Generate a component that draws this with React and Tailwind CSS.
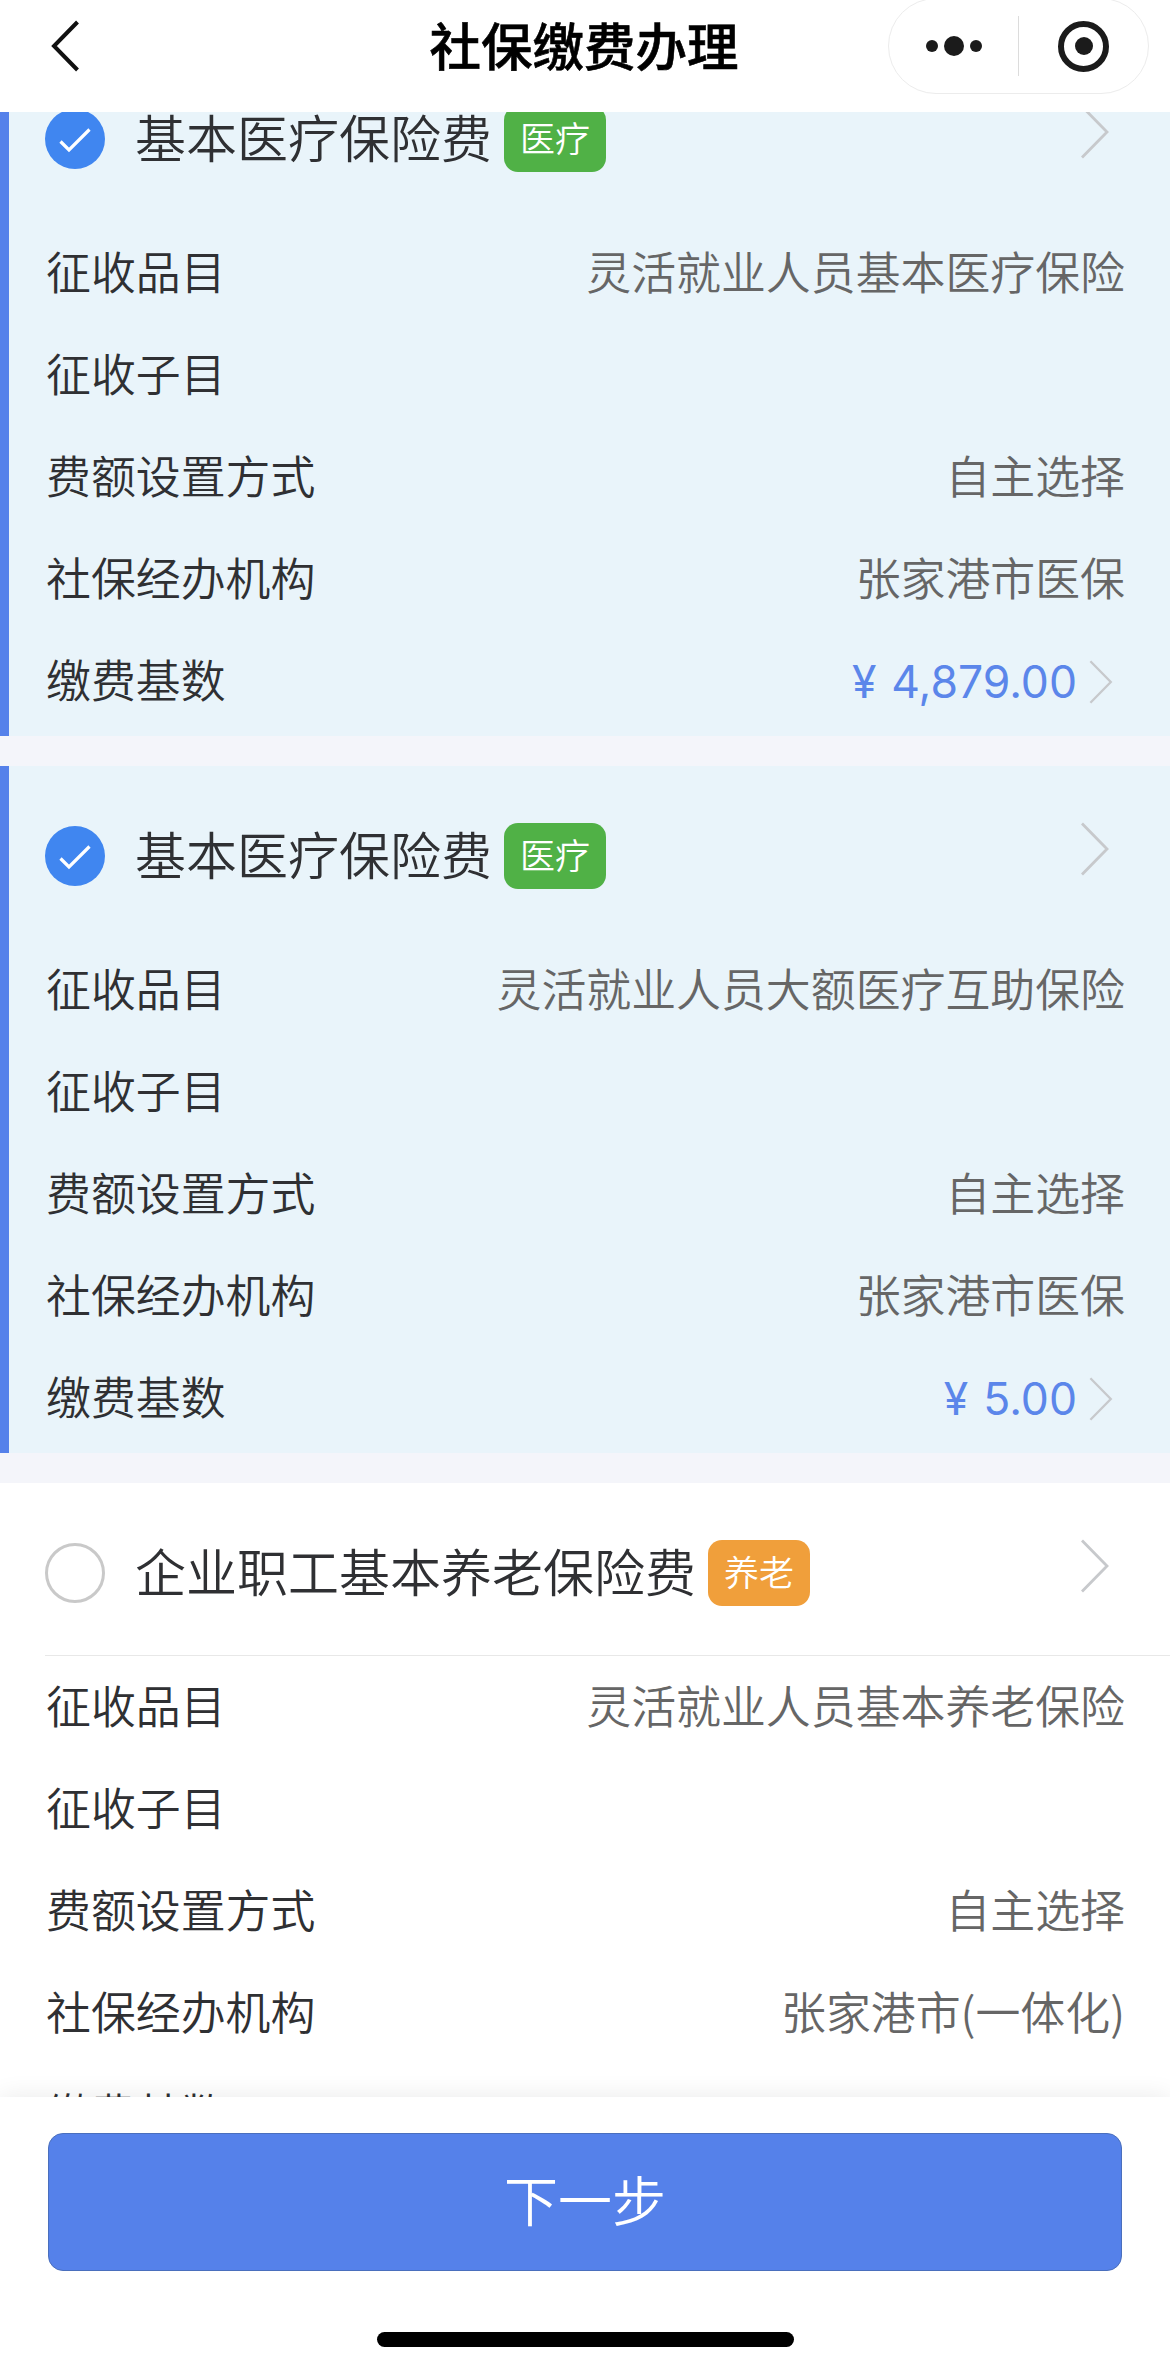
const plans = [
  {
    id: "medical-basic",
    name: "基本医疗保险费",
    tag: "医疗",
    checked: true,
    item: "灵活就业人员基本医疗保险",
    agency: "张家港市医保",
    base: "4,879.00",
  },
  {
    id: "medical-large",
    name: "基本医疗保险费",
    tag: "医疗",
    checked: true,
    item: "灵活就业人员大额医疗互助保险",
    agency: "张家港市医保",
    base: "5.00",
  },
  {
    id: "pension",
    name: "企业职工基本养老保险费",
    tag: "养老",
    checked: false,
    item: "灵活就业人员基本养老保险",
    agency: "张家港市(一体化)",
    base: "",
  },
];

const tagTone = {
  医疗: "bg-[#50b146]",
  养老: "bg-[#f09f3b]",
};

export default function App() {
  return (
    <div className="flex h-[2363px] w-[1170px] flex-col overflow-hidden bg-white font-['Noto_Sans_CJK_SC',sans-serif]">
      <NavBar />
      <main className="min-h-0 flex-1 overflow-hidden bg-[#f4f5fa]">
        {/* the list is scrolled a little under the nav bar */}
        <div className="-mt-[63px] flex flex-col gap-[30px]">
          {plans.map((plan) => (
            <PlanCard key={plan.id} plan={plan} />
          ))}
        </div>
      </main>
      <Footer />
    </div>
  );
}

function NavBar() {
  return (
    <header className="grid h-28 shrink-0 grid-cols-[1fr_auto_1fr] items-start bg-white">
      <svg
        className="mt-[18px] ml-[49px] h-14 w-8"
        viewBox="0 0 32 56"
        fill="none"
        stroke="#111"
        strokeWidth="4"
      >
        <path d="M28.500 4 5 28l23.500 24" />
      </svg>
      <h1 className="mt-1.5 mr-0.5 text-[51.5px] leading-[76px] font-medium text-black [-webkit-text-stroke:0.6px_#000]">
        社保缴费办理
      </h1>
      <div className="mr-[21px] -mt-0.5 flex h-24 w-[261px] items-center justify-self-end rounded-full border border-[#ececec]">
        <div className="flex flex-1 items-center justify-center gap-1.5">
          <i className="size-3 rounded-full bg-[#1b1b1b]" />
          <i className="size-5 rounded-full bg-[#1b1b1b]" />
          <i className="size-3 rounded-full bg-[#1b1b1b]" />
        </div>
        <div className="h-[60px] w-px bg-[#dcdcdc]" />
        <div className="flex flex-1 items-center justify-center">
          <div className="flex size-[51px] items-center justify-center rounded-full border-[6px] border-[#1b1b1b]">
            <i className="size-[18px] rounded-full bg-[#1b1b1b]" />
          </div>
        </div>
      </div>
    </header>
  );
}

function PlanCard({ plan }) {
  const { checked } = plan;
  return (
    <section
      className={`flex h-[687px] shrink-0 ${checked ? "bg-[#e9f4fa]" : "bg-white"}`}
    >
      <div className={`w-[9px] ${checked ? "bg-[#5581ea]" : "bg-white"}`} />
      <div className="flex-1 pl-9">
        <div
          className={`flex h-[173px] items-center border-b pt-2 pr-[61px] ${
            checked ? "border-transparent" : "border-[#e8e8e8]"
          }`}
        >
          <CheckMark checked={checked} />
          <h2 className="-mt-[7px] ml-[30px] text-[51px] leading-[72px] font-[350] text-[#2f3033]">
            {plan.name}
          </h2>
          <span
            className={`ml-3 flex h-[66px] w-[102px] items-center justify-center rounded-[14px] pb-1.5 text-[35px] leading-none font-[350] text-white ${tagTone[plan.tag]}`}
          >
            {plan.tag}
          </span>
          <Arrow className="mb-[15px] ml-auto h-[54px] w-7" />
        </div>
        <div className="pt-px pr-[45px]">
          <Row label="征收品目" value={plan.item} />
          <Row label="征收子目" />
          <Row label="费额设置方式" value="自主选择" />
          <Row label="社保经办机构" value={plan.agency} />
          <Row label="缴费基数">
            {plan.base && (
              <span className="flex items-center pr-[12px] font-['Inter',sans-serif] text-[44.5px] font-normal text-[#5b86ea]">
                <span className="mr-[15px]">¥</span>
                {plan.base}
                <Arrow className="ml-3 h-[44px] w-[24px]" />
              </span>
            )}
          </Row>
        </div>
      </div>
    </section>
  );
}

function Row({ label, value, children }) {
  return (
    <div className="flex h-[102px] items-center justify-between text-[44.9px] leading-[64px]">
      <span className="pb-1.5 pl-px font-[350] text-[#2f3033]">{label}</span>
      {children || (
        <span className="pb-1.5 font-[350] text-[#666]">{value}</span>
      )}
    </div>
  );
}

function CheckMark({ checked }) {
  if (!checked) {
    return <div className="size-[60px] rounded-full border-[3px] border-[#c9c9c9]" />;
  }
  return (
    <svg className="size-[60px]" viewBox="0 0 60 60" fill="none">
      <circle cx="30" cy="30" r="30" fill="#4086f0" />
      <path d="M15.5 32.5 24 41l20.500-20.500" stroke="#fff" strokeWidth="3.200" />
    </svg>
  );
}

function Arrow({ className }) {
  return (
    <svg
      className={className}
      viewBox="0 0 28 54"
      fill="none"
      stroke="#c7c9cc"
      strokeWidth="2.800"
    >
      <path d="M1 1.500 26 27 1 52.500" />
    </svg>
  );
}

function Footer() {
  return (
    <footer className="relative flex h-[266px] shrink-0 flex-col items-center bg-white pt-9 shadow-[0_0_24px_rgba(0,0,0,0.09)]">
      <button className="h-[138px] w-[1074px] rounded-[15px] border border-[#4a6fbd] bg-[#5581ea] pb-[7px] text-[54px] font-[350] text-white">
        下一步
      </button>
      <div className="mt-[61px] h-[15px] w-[417px] rounded-full bg-black" />
    </footer>
  );
}
